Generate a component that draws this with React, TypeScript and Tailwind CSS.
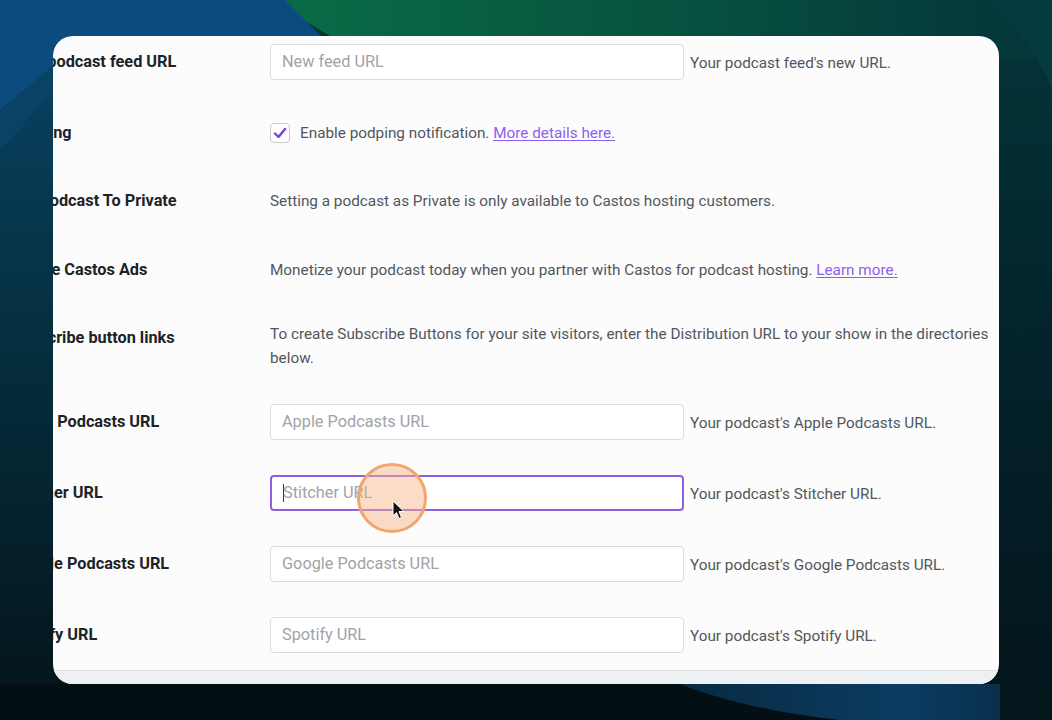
import React from "react";

const font = { fontFamily: "Roboto, 'Liberation Sans', sans-serif" };

const Backdrop = () => (
  <svg
    className="absolute inset-0"
    width="1052"
    height="720"
    viewBox="0 0 1052 720"
  >
    <defs>
      <linearGradient id="base" x1="0" y1="0" x2="0" y2="1">
        <stop offset="0" stopColor="#043439" />
        <stop offset="0.55" stopColor="#03212a" />
        <stop offset="1" stopColor="#03141a" />
      </linearGradient>
      <linearGradient id="top" x1="0" y1="0" x2="1" y2="0">
        <stop offset="0" stopColor="#0a6c46" />
        <stop offset="0.45" stopColor="#075640" />
        <stop offset="1" stopColor="#04343a" />
      </linearGradient>
      <linearGradient id="left" x1="0" y1="0" x2="0" y2="1">
        <stop offset="0" stopColor="#0a4568" />
        <stop offset="0.45" stopColor="#053040" />
        <stop offset="1" stopColor="#04131a" />
      </linearGradient>
      <linearGradient id="blob" x1="0" y1="0" x2="1" y2="0">
        <stop offset="0" stopColor="#072a42" />
        <stop offset="0.7" stopColor="#0c3c62" />
        <stop offset="1" stopColor="#08304c" />
      </linearGradient>
    </defs>
    <rect width="1052" height="720" fill="url(#base)" />
    <path d="M270 0 L1052 0 L1052 60 L370 60 Z" fill="url(#top)" />
    <rect x="0" y="0" width="60" height="720" fill="url(#left)" />
    <path d="M0 0 L285 0 L345 60 L60 60 L0 110 Z" fill="#0b4b7e" />
    <path d="M0 110 L60 60 L60 85 L0 150 Z" fill="#0a4266" />
    <path d="M0 684 L680 684 C720 700 780 714 840 720 L0 720 Z" fill="#040f13" />
    <path
      d="M680 684 C720 700 780 714 840 720 L1000 720 L1000 684 Z"
      fill="url(#blob)"
    />
    <path d="M1000 684 L1052 684 L1052 720 L1000 720 Z" fill="#03161c" />
    <path d="M985 0 C1020 30 1040 60 1052 90 L1052 0 Z" fill="#053b3e" />
  </svg>
);

const Label = ({ children }: { children: React.ReactNode }) => (
  <div className="w-[259px] shrink-0 text-[16.3px] font-bold text-[#1d2327] whitespace-nowrap">
    {children}
  </div>
);

const Field = ({
  placeholder,
  hint,
  focused = false,
}: {
  placeholder: string;
  hint: string;
  focused?: boolean;
}) => (
  <div className="flex items-center gap-[6px]">
    <div
      className={`relative w-[414px] h-[36px] rounded-[4px] bg-white flex items-center ${
        focused
          ? "border-2 border-[#8f5fe3] pl-[11px]"
          : "border border-[#dcdcde] pl-[11px]"
      }`}
    >
      {focused && <span className="w-px h-[18px] bg-[#333] mr-[-1px]" />}
      <span className="text-[16.3px] text-[#a0a3a7]">{placeholder}</span>
      {focused && (
        <div className="absolute left-[85px] top-[-14px] w-[70px] h-[70px] rounded-full border-[3px] border-[#f2a66c] bg-[#f7b483]/45">
          <svg
            className="absolute left-[32px] top-[34px]"
            width="14"
            height="20"
            viewBox="0 0 14 20"
          >
            <path
              d="M1 1 L1 16 L4.5 12.5 L7 18.5 L9.5 17.5 L7 11.5 L12 11.5 Z"
              fill="#111"
              stroke="#fff"
              strokeWidth="1"
            />
          </svg>
        </div>
      )}
    </div>
    <span className="mt-[3px] text-[15.3px] text-[#50575e] whitespace-nowrap">{hint}</span>
  </div>
);

const Link = ({ children }: { children: React.ReactNode }) => (
  <a className="text-[#8d5ff0] underline underline-offset-2">{children}</a>
);

export default function App() {
  return (
    <div
      className="relative w-[1052px] h-[720px] overflow-hidden bg-[#04151a]"
      style={font}
    >
      <Backdrop />
      <div className="relative pt-[36px] pl-[53px]">
        <div className="w-[946px] h-[648px] rounded-[20px] overflow-hidden bg-[#fcfcfc] flex flex-col">
          <div className="flex-1 -ml-[42px] pt-[8px] flex flex-col">
            <div className="flex items-center h-[36px]">
              <Label>New podcast feed URL</Label>
              <Field placeholder="New feed URL" hint="Your podcast feed's new URL." />
            </div>

            <div className="flex items-center h-[36px] mt-[35px]">
              <Label>Podping</Label>
              <div className="flex items-center gap-[10px] text-[15.3px] text-[#50575e]">
                <span className="w-[20px] h-[20px] rounded-[4px] border border-[#c9cbce] bg-white flex items-center justify-center">
                  <svg width="14" height="14" viewBox="0 0 14 14">
                    <path
                      d="M2 7.5 L5.5 11 L12 3"
                      fill="none"
                      stroke="#7b3fe4"
                      strokeWidth="2.4"
                      strokeLinecap="round"
                      strokeLinejoin="round"
                    />
                  </svg>
                </span>
                <span>
                  Enable podping notification. <Link>More details here.</Link>
                </span>
              </div>
            </div>

            <div className="flex items-center h-[36px] mt-[32px]">
              <Label>Set Podcast To Private</Label>
              <span className="text-[15.3px] text-[#50575e]">
                Setting a podcast as Private is only available to Castos hosting customers.
              </span>
            </div>

            <div className="flex items-center h-[36px] mt-[33px]">
              <Label>Enable Castos Ads</Label>
              <span className="text-[15.3px] text-[#50575e]">
                Monetize your podcast today when you partner with Castos for podcast hosting.{" "}
                <Link>Learn more.</Link>
              </span>
            </div>

            <div className="flex items-start h-[48px] mt-[34px]">
              <div className="pt-[4px]">
                <Label>Subscribe button links</Label>
              </div>
              <p className="text-[15.3px] leading-[24px] text-[#50575e] whitespace-nowrap">
                To create Subscribe Buttons for your site visitors, enter the Distribution URL to your show in the directories
                <br />
                below.
              </p>
            </div>

            <div className="flex items-center h-[36px] mt-[34px]">
              <Label>Apple Podcasts URL</Label>
              <Field placeholder="Apple Podcasts URL" hint="Your podcast's Apple Podcasts URL." />
            </div>

            <div className="flex items-center h-[36px] mt-[35px]">
              <Label>Stitcher URL</Label>
              <Field placeholder="Stitcher URL" hint="Your podcast's Stitcher URL." focused />
            </div>

            <div className="flex items-center h-[36px] mt-[35px]">
              <Label>Google Podcasts URL</Label>
              <Field placeholder="Google Podcasts URL" hint="Your podcast's Google Podcasts URL." />
            </div>

            <div className="flex items-center h-[36px] mt-[35px]">
              <Label>Spotify URL</Label>
              <Field placeholder="Spotify URL" hint="Your podcast's Spotify URL." />
            </div>
          </div>
          <div className="h-[14px] border-t border-[#e0e3e6] bg-[#eef1f4]" />
        </div>
      </div>
    </div>
  );
}
